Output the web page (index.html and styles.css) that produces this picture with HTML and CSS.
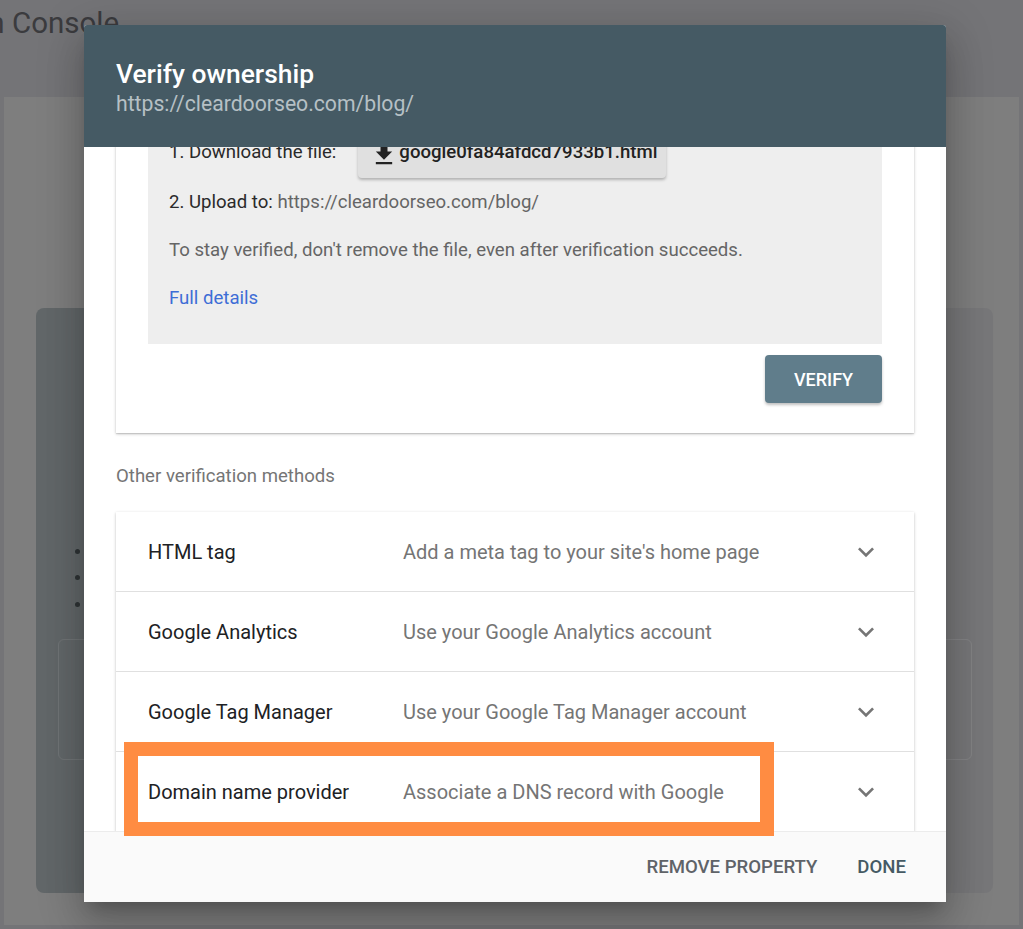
FILE: index.html
```html
<!DOCTYPE html>
<html lang="en">
<head>
<meta charset="utf-8">
<title>Verify ownership</title>
<link rel="stylesheet" href="styles.css">
</head>
<body>
<div class="page">
  <header class="topbar"><span class="brand">Search Console</span></header>
  <main class="panel">
    <section class="bg-card">
      <div class="bg-bullets"><span class="dot"></span><span class="dot"></span><span class="dot"></span></div>
      <div class="bg-box"></div>
    </section>
  </main>
</div>

<div class="dialog" role="dialog" aria-label="Verify ownership">
  <div class="dlg-head">
    <h1 class="dlg-title">Verify ownership</h1>
    <div class="dlg-sub">https://cleardoorseo.com/blog/</div>
  </div>
  <div class="dlg-body">
    <div class="scroll">
      <section class="method-card">
        <div class="steps">
          <div class="step step-download">
            <span class="label">1. Download the file:</span>
            <button class="dl-btn" type="button"><svg class="dl-ico" viewBox="0 0 24 24" aria-hidden="true"><path d="M19 9h-4V3H9v6H5l7 7 7-7zM5 18v2h14v-2H5z"/></svg><span>google0fa84afdcd7933b1.html</span></button>
          </div>
          <div class="step"><span class="label">2. Upload to:</span>&nbsp;<span class="muted">https://cleardoorseo.com/blog/</span></div>
          <div class="step muted">To stay verified, don't remove the file, even after verification succeeds.</div>
          <div class="step"><a class="link" href="#">Full details</a></div>
        </div>
        <div class="actions"><button class="verify" type="button">VERIFY</button></div>
      </section>
      <h2 class="other">Other verification methods</h2>
      <ul class="methods">
        <li class="method"><span class="m-title">HTML tag</span><span class="m-desc">Add a meta tag to your site's home page</span><svg class="chev" viewBox="0 0 24 24" aria-hidden="true"><path d="M7.41 8.59 12 13.17l4.59-4.58L18 10l-6 6-6-6z"/></svg></li>
        <li class="method"><span class="m-title">Google Analytics</span><span class="m-desc">Use your Google Analytics account</span><svg class="chev" viewBox="0 0 24 24" aria-hidden="true"><path d="M7.41 8.59 12 13.17l4.59-4.58L18 10l-6 6-6-6z"/></svg></li>
        <li class="method"><span class="m-title">Google Tag Manager</span><span class="m-desc">Use your Google Tag Manager account</span><svg class="chev" viewBox="0 0 24 24" aria-hidden="true"><path d="M7.41 8.59 12 13.17l4.59-4.58L18 10l-6 6-6-6z"/></svg></li>
        <li class="method"><span class="m-title">Domain name provider</span><span class="m-desc">Associate a DNS record with Google</span><svg class="chev" viewBox="0 0 24 24" aria-hidden="true"><path d="M7.41 8.59 12 13.17l4.59-4.58L18 10l-6 6-6-6z"/></svg></li>
      </ul>
    </div>
  </div>
  <div class="dlg-foot">
    <button class="text-btn remove" type="button">REMOVE PROPERTY</button>
    <button class="text-btn done" type="button">DONE</button>
  </div>
  <div class="highlight"></div>
</div>
</body>
</html>
```

FILE: styles.css
```css
* { box-sizing: border-box; }

html, body {
  margin: 0;
  padding: 0;
}

body {
  width: 1023px;
  height: 929px;
  overflow: hidden;
  position: relative;
  background: #747477;
  font-family: Roboto, "Noto Sans", "Liberation Sans", Arial, sans-serif;
}

/* ---------- background page (under scrim) ---------- */
.topbar {
  height: 97px;
  padding-top: 9px;
  overflow: hidden;
}

.brand {
  display: block;
  white-space: nowrap;
  font-size: 29.5px;
  line-height: 1;
  color: #3b3b3e;
  margin-left: -86px;
}

.panel {
  margin: 0 4px;
  height: 828px;
  background: #7e7e7e;
  padding: 211px 0 0 32px;
}

.bg-card {
  width: 957px;
  height: 585px;
  border-radius: 8px;
  background: linear-gradient(to right, #626769 50%, #777779 50%);
  padding: 230px 21px 0 22px;
}

.bg-bullets {
  display: flex;
  flex-direction: column;
  padding-left: 17px;
}

.dot {
  height: 26.5px;
  display: flex;
  align-items: center;
}

.dot::before {
  content: "";
  width: 5px;
  height: 5px;
  border-radius: 50%;
  background: #2f3436;
}

.bg-box {
  margin-top: 21.5px;
  height: 121px;
  border: 1px solid rgba(255, 255, 255, 0.09);
  border-radius: 6px;
}

/* ---------- dialog ---------- */
.dialog {
  position: absolute;
  left: 84px;
  top: 25px;
  width: 862px;
  height: 877px;
  display: flex;
  flex-direction: column;
  background: #fff;
  border-radius: 3px;
  box-shadow: 0 11px 15px -7px rgba(0, 0, 0, 0.2), 0 24px 38px 3px rgba(0, 0, 0, 0.14), 0 9px 46px 8px rgba(0, 0, 0, 0.12);
}

.dlg-head {
  flex: 0 0 122px;
  background: #455a64;
  padding: 33px 32px 0;
  border-radius: 3px 3px 0 0;
  position: relative;
  z-index: 2;
}

.dlg-title {
  margin: 0;
  font-size: 26.4px;
  line-height: 32px;
  font-weight: 500;
  color: #fff;
}

.dlg-sub {
  font-size: 21.2px;
  line-height: 28px;
  color: #b6c0c5;
}

.dlg-body {
  flex: 1 1 auto;
  overflow: hidden;
  padding: 0 32px;
}

.scroll {
  margin-top: -75px;
}

.method-card {
  background: #fff;
  padding: 32px 32px 30px;
  box-shadow: 0 1px 3px rgba(0, 0, 0, 0.22), 0 1px 1px rgba(0, 0, 0, 0.1);
}

.steps {
  background: #eeeeee;
  padding: 22px 21px;
  font-size: 18.6px;
  color: #2a2a2a;
}

.step {
  height: 48px;
  display: flex;
  align-items: center;
  white-space: nowrap;
}

.step-download {
  height: 52px;
}

.muted {
  color: #656565;
}

.dl-btn {
  margin-left: 22px;
  height: 52px;
  display: flex;
  align-items: center;
  padding: 0 9px 0 12px;
  border: 0;
  border-radius: 4px;
  background: #e0e0e0;
  box-shadow: 0 2px 3px rgba(0, 0, 0, 0.25);
  font-family: inherit;
  font-size: 18.6px;
  font-weight: 500;
  color: #222;
}

.dl-ico {
  width: 28px;
  height: 28px;
  margin: 6px 1px 0 0;
  fill: #222;
}

.link {
  color: #3d6dd6;
  text-decoration: none;
}

.actions {
  display: flex;
  justify-content: flex-end;
  margin-top: 11px;
}

.verify {
  height: 48px;
  width: 117px;
  border: 0;
  border-radius: 4px;
  background: #607d8b;
  color: #fff;
  font-family: inherit;
  font-size: 18px;
  font-weight: 500;
  box-shadow: 0 2px 3px rgba(0, 0, 0, 0.25);
}

.other {
  margin: 31px 0 24px;
  font-size: 18.6px;
  line-height: 24px;
  font-weight: 400;
  color: #757575;
}

.methods {
  list-style: none;
  margin: 0;
  padding: 0;
  box-shadow: 0 1px 3px rgba(0, 0, 0, 0.22), 0 1px 1px rgba(0, 0, 0, 0.08);
}

.method {
  height: 80px;
  display: flex;
  align-items: center;
  padding: 0 32px;
  border-bottom: 1px solid #e0e0e0;
  font-size: 20px;
  white-space: nowrap;
}

.m-title {
  flex: 0 0 255px;
  color: #202124;
}

.m-desc {
  flex: 1 1 auto;
  color: #757575;
}

.chev {
  width: 32px;
  height: 32px;
  fill: #757575;
}

.dlg-foot {
  flex: 0 0 71px;
  display: flex;
  align-items: center;
  justify-content: flex-end;
  gap: 40px;
  padding-right: 40px;
  background: #fafafa;
  border-top: 1px solid #ececec;
  position: relative;
  z-index: 1;
}

.text-btn {
  border: 0;
  background: none;
  padding: 0;
  font-family: inherit;
  font-size: 18.6px;
  font-weight: 500;
}

.remove { color: #5f6368; }
.done { color: #455a64; }

.highlight {
  position: absolute;
  left: 40px;
  top: 717px;
  width: 650px;
  height: 94px;
  border: 14px solid #ff8c42;
  z-index: 3;
}
```
